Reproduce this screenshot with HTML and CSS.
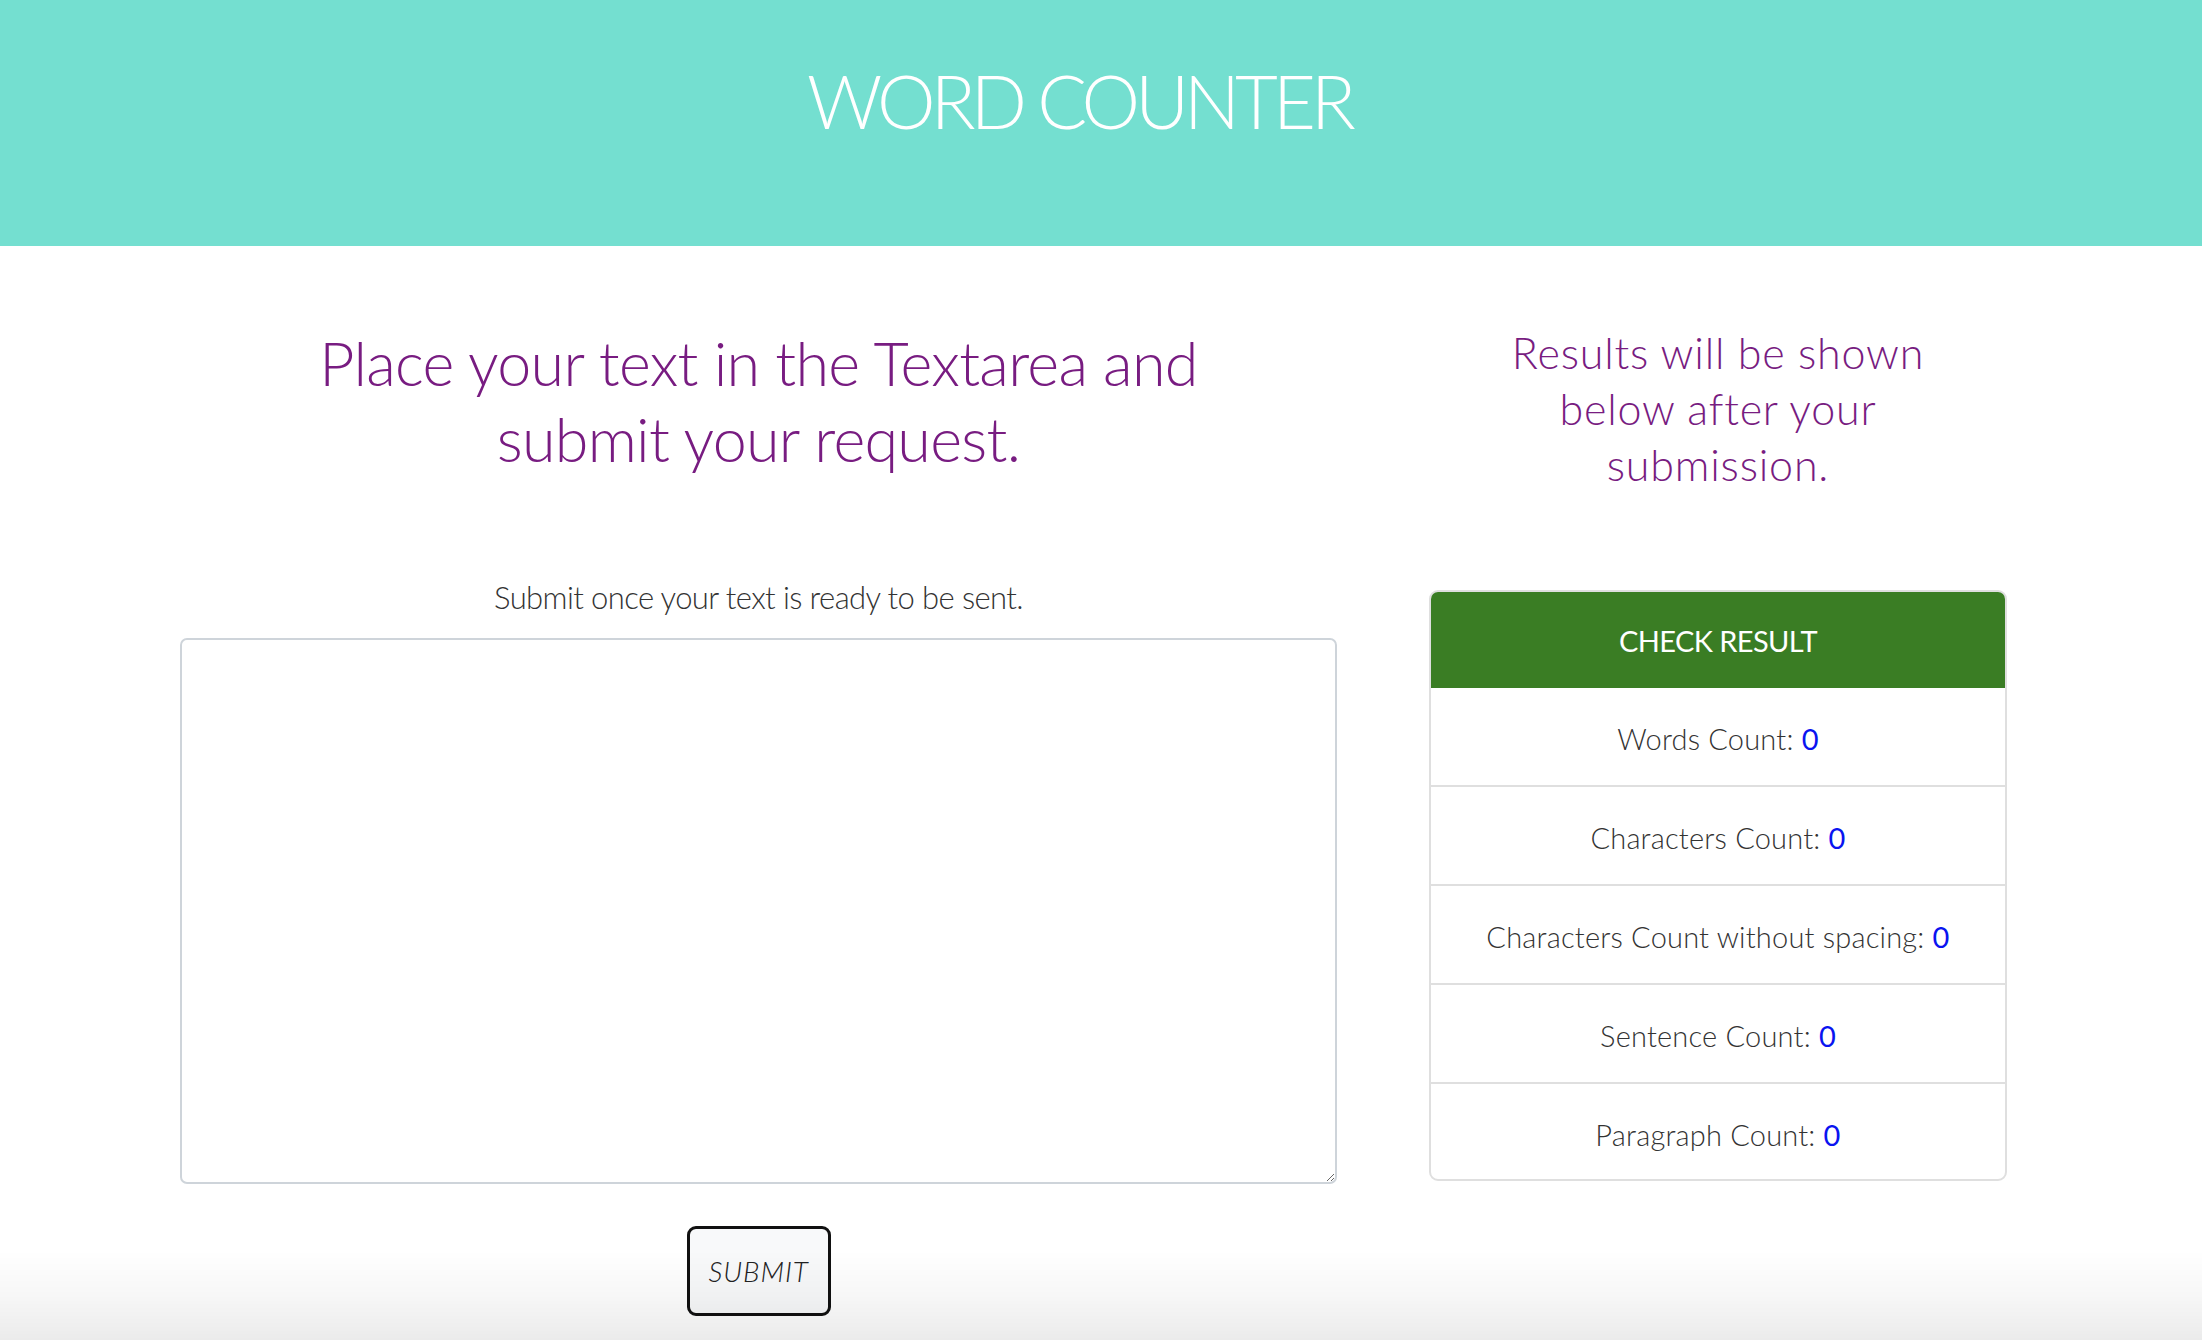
FILE: index.html
```html
<!DOCTYPE html>
<html lang="en">
<head>
<meta charset="utf-8">
<title>Word Counter</title>
<link rel="stylesheet" href="styles.css">
</head>
<body>
<header class="site-header">
  <h1 class="site-title">WORD COUNTER</h1>
</header>
<main class="layout">
  <section class="col-input">
    <h2 class="lead-heading">Place your text in the Textarea and<br>submit your request.</h2>
    <p class="hint">Submit once your text is ready to be sent.</p>
    <textarea class="text-input"></textarea>
    <button class="submit-btn" type="button">SUBMIT</button>
  </section>
  <section class="col-results">
    <h2 class="results-heading">Results will be shown<br>below after your<br>submission.</h2>
    <div class="result-card">
      <div class="card-head">CHECK RESULT</div>
      <div class="result-row">Words Count: <span class="num">0</span></div>
      <div class="result-row">Characters Count: <span class="num">0</span></div>
      <div class="result-row">Characters Count without spacing: <span class="num">0</span></div>
      <div class="result-row">Sentence Count: <span class="num">0</span></div>
      <div class="result-row">Paragraph Count: <span class="num">0</span></div>
    </div>
  </section>
</main>
<div class="bottom-shade"></div>
</body>
</html>
```
FILE: styles.css
```css
html, body {
  margin: 0;
  padding: 0;
  background: #ffffff;
}
body {
  font-family: Lato, "Liberation Sans", sans-serif;
  font-weight: 300;
  color: #333333;
  min-height: 1340px;
  overflow: hidden;
}
.site-header {
  height: 246px;
  background: #74dfd0;
  display: flex;
  justify-content: center;
  padding-right: 44px;
  box-sizing: border-box;
}
.site-title {
  margin: 0;
  padding-top: 56px;
  font-size: 74px;
  line-height: 90px;
  font-weight: 300;
  color: #ffffff;
  letter-spacing: -4.9px;
}
.layout {
  display: flex;
  align-items: flex-start;
  padding-left: 180px;
  gap: 92px;
  padding-top: 79px;
}
.col-input {
  width: 1157px;
  display: flex;
  flex-direction: column;
  align-items: center;
}
.lead-heading {
  margin: 0;
  font-size: 61px;
  line-height: 75.6px;
  font-weight: 300;
  color: #781c81;
  text-align: center;
  letter-spacing: -0.7px;
}
.hint {
  margin: 101px 0 0;
  font-size: 31px;
  line-height: 40px;
  font-weight: 300;
  color: #333333;
  letter-spacing: -0.6px;
}
.text-input {
  margin-top: 21px;
  width: 1157px;
  height: 546px;
  box-sizing: border-box;
  border: 2px solid #ced4da;
  border-radius: 7px;
  background: #ffffff;
  font-family: Lato, sans-serif;
  font-size: 28px;
}
.submit-btn {
  margin-top: 42px;
  width: 144px;
  height: 90px;
  box-sizing: border-box;
  border: 3px solid #111111;
  border-radius: 9px;
  background: #f8f9fa;
  font-family: Lato, sans-serif;
  font-style: italic;
  font-weight: 300;
  font-size: 28px;
  letter-spacing: 0.9px;
  color: #222222;
  padding: 0;
}
.col-results {
  width: 578px;
  display: flex;
  flex-direction: column;
}
.results-heading {
  margin: 0;
  font-size: 43px;
  line-height: 56px;
  font-weight: 300;
  color: #781c81;
  text-align: center;
  letter-spacing: 0.8px;
}
.result-card {
  margin-top: 97px;
  border: 2px solid #dfdfdf;
  border-radius: 9px;
  overflow: hidden;
}
.card-head {
  height: 96px;
  line-height: 97px;
  background: #3a7d24;
  color: #ffffff;
  font-weight: 400;
  font-size: 29px;
  text-align: center;
  letter-spacing: -0.6px;
}
.result-row {
  height: 97px;
  line-height: 102px;
  font-size: 29px;
  font-weight: 300;
  color: #333333;
  text-align: center;
  letter-spacing: 0.2px;
}
.result-row:last-child {
  height: 95px;
}
.result-row + .result-row {
  border-top: 2px solid #dfdfdf;
}
.num {
  color: #0a14f0;
  font-weight: 400;
}
.bottom-shade {
  position: fixed;
  left: 0;
  right: 0;
  bottom: 0;
  height: 90px;
  pointer-events: none;
  background: linear-gradient(to bottom, rgba(0,0,0,0) 0%, rgba(0,0,0,0.03) 50%, rgba(0,0,0,0.08) 100%);
}
```
